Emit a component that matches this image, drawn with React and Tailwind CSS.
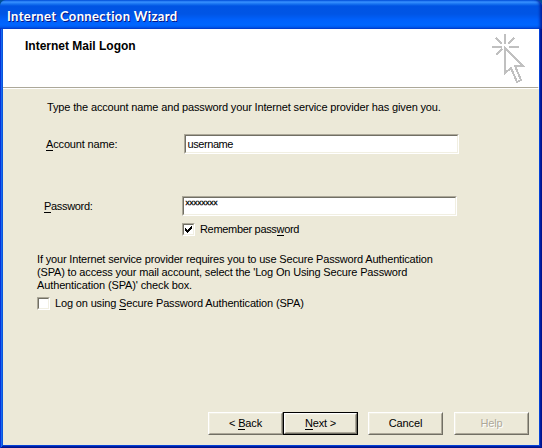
import React from "react";

const U = ({ children }) => (
  <span className="relative inline-block after:absolute after:inset-x-0 after:bottom-[0px] after:h-px after:bg-current">{children}</span>
);

const Field = ({ children, className = "" }) => (
  <div className={`h-5 w-[275px] border border-t-[#aca899] border-l-[#aca899] border-r-white border-b-white ${className}`}>
    <div className="flex h-full w-full border border-t-[#716f64] border-l-[#716f64] border-r-[#f1efe2] border-b-[#f1efe2] bg-white pl-[1.5px]">
      {children}
    </div>
  </div>
);

const Check = ({ checked }) => (
  <div className="size-[13px] shrink-0 border border-t-[#aca899] border-l-[#aca899] border-r-white border-b-white">
    <div className="size-full border border-t-[#716f64] border-l-[#716f64] border-r-[#f1efe2] border-b-[#f1efe2] bg-white">
      {checked && (
        <svg width="9" height="9" viewBox="0 0 9 9" shapeRendering="crispEdges">
          <path d="M1 3h1v1h1v1h1v-1h1v-1h1v-1h1v-1h1v3h-1v1h-1v1h-1v1h-1v1h-1v-1h-1v-1h-1z" fill="#000" />
        </svg>
      )}
    </div>
  </div>
);

const Button = ({ children, className = "", primary }) => (
  <div className={`h-[23px] w-[75px] ${primary ? "border border-black" : ""} ${className}`}>
    <div className="h-full w-full border border-t-white border-l-white border-r-[#716f64] border-b-[#716f64]">
      <div className="flex h-full w-full items-center justify-center border border-t-[#f1efe2] border-l-[#f1efe2] border-r-[#aca899] border-b-[#aca899] tracking-[-0.15px] whitespace-pre">
        {children}
      </div>
    </div>
  </div>
);

export default function App() {
  return (
    <div className="flex h-[448px] w-[542px] flex-col overflow-hidden bg-[#004e98] font-['Liberation_Sans',Arial,sans-serif] text-[11px] leading-[13px] whitespace-nowrap text-black">
      <div className="flex h-[29px] shrink-0 rounded-t-[6px] bg-[linear-gradient(180deg,#0058e6_0px,#3a93ff_2px,#1672f0_4px,#0054e3_6px,#0055e5_14px,#0061fc_20px,#0066ff_25px,#005bf0_27px,#003dd0_29px)] pl-[7px] shadow-[inset_-3px_0_3px_-1px_#001f9c]">
        <span className="mt-[9px] font-['Lato',sans-serif] text-[13px] leading-[15px] font-bold tracking-[0.36px] text-white [text-shadow:1px_1px_0_#0a1883]">Internet Connection Wizard</span>
      </div>
      <div className="flex min-h-0 flex-1 flex-col bg-[#ece9d8] px-[3px] pb-[3px] shadow-[inset_1px_0_0_#0831d9,inset_-1px_-1px_0_#00138c,inset_2px_0_0_#166aee,inset_-2px_-2px_0_#001ea0,inset_3px_0_0_#0855dd,inset_-3px_-3px_0_#0441d8]">
        <div className="flex h-[58px] shrink-0 justify-between bg-white">
          <span className="mt-[11px] ml-[22px] text-[12px] font-bold">Internet Mail Logon</span>
          <svg className="mt-1 mr-3" width="36" height="52" viewBox="491 33 36 52" fill="none" stroke="#c0c0c0" strokeWidth="2" shapeRendering="crispEdges">
            <path d="M505 34v10M492 47h10M509 47h10M496 38l6 6M514 38l-6 6M496 55l6-6" />
            <path d="M505 48v25l6-5l6 14l4-2l-6-14h8z" />
          </svg>
        </div>
        <div className="mr-px h-px shrink-0 bg-[#aca899]" />
        <div className="h-px shrink-0 bg-white" />
        <div className="mt-[12px] ml-[44px] tracking-[-0.146px]">Type the account name and password your Internet service provider has given you.</div>
        <div className="mt-[20px] flex h-5">
          <span className="mt-[4px] ml-[43px] w-[138px] tracking-[-0.15px]"><U>A</U>ccount name:</span>
          <Field><span className="mt-[2px] tracking-[-0.42px]">username</span></Field>
        </div>
        <div className="mt-[42px] flex h-5">
          <span className="mt-[4px] ml-[41px] w-[138px] tracking-[-0.33px]"><U>P</U>assword:</span>
          <Field><span className="mt-[1px] text-[8px] leading-[8px] [-webkit-text-stroke:0.3px_#000]">xxxxxxxx</span></Field>
        </div>
        <div className="mt-[7px] ml-[179px] flex h-[13px]">
          <Check checked />
          <span className="ml-[5px] tracking-[-0.32px]">Remember pass<U>w</U>ord</span>
        </div>
        <div className="mt-[17px] ml-[34px] flex flex-col items-start">
          <span className="tracking-[-0.167px]">If your Internet service provider requires you to use Secure Password Authentication</span>
          <span className="tracking-[-0.16px]">(SPA) to access your mail account, select the 'Log On Using Secure Password</span>
          <span className="tracking-[-0.125px]">Authentication (SPA)' check box.</span>
        </div>
        <div className="mt-[5px] ml-[34px] flex h-[13px]">
          <Check />
          <span className="ml-[5px] tracking-[-0.15px]">Log on using <U>S</U>ecure Password Authentication (SPA)</span>
        </div>
        <div className="mt-auto mb-[10px] ml-[205px] flex">
          <Button><span>&lt; <U>B</U>ack</span></Button>
          <Button primary><span><U>N</U>ext &gt;</span></Button>
          <Button className="ml-[10px]">Cancel</Button>
          <Button className="ml-[11px]"><span className="text-[#aca899] [text-shadow:1px_1px_0_#fff]">Help</span></Button>
        </div>
      </div>
    </div>
  );
}
